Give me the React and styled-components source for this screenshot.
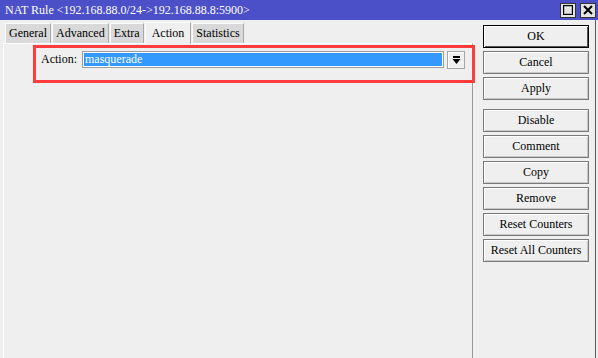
import React from 'react'
import styled, { createGlobalStyle } from 'styled-components'

const tabs = ['General', 'Advanced', 'Extra', 'Action', 'Statistics']
const mainButtons = ['OK', 'Cancel', 'Apply']
const ruleButtons = ['Disable', 'Comment', 'Copy', 'Remove', 'Reset Counters', 'Reset All Counters']

export default function App() {
  return (
    <>
      <GlobalStyle />
      <Window>
        <TitleBar>
          <Title>NAT Rule &lt;192.168.88.0/24-&gt;192.168.88.8:5900&gt;</Title>
          <WinControls>
            <WinButton>
              <svg width="10" height="10" viewBox="0 0 10 10">
                <rect x="0.5" y="0.5" width="9" height="9" fill="none" stroke="#000" strokeWidth="1.4" />
              </svg>
            </WinButton>
            <WinButton>
              <svg width="10" height="10" viewBox="0 0 10 10">
                <path d="M1 1 L9 9 M9 1 L1 9" stroke="#000" strokeWidth="2" />
              </svg>
            </WinButton>
          </WinControls>
        </TitleBar>
        <Body>
          <Main>
            <TabBar>
              {tabs.map((t) => (
                <Tab key={t} active={t === 'Action'}>{t}</Tab>
              ))}
            </TabBar>
            <Panel>
              <Highlight>
                <FieldLabel>Action:</FieldLabel>
                <SelectBox>masquerade</SelectBox>
                <DropButton>
                  <svg width="9" height="9" viewBox="0 0 9 9">
                    <rect x="1" y="0" width="7" height="2" fill="#000" />
                    <path d="M0.5 3 L8.5 3 L4.5 8 Z" fill="#000" />
                  </svg>
                </DropButton>
              </Highlight>
            </Panel>
          </Main>
          <Side>
            <ButtonGroup>
              {mainButtons.map((b) => (
                <Button key={b} primary={b === 'OK'}>{b}</Button>
              ))}
            </ButtonGroup>
            <ButtonGroup>
              {ruleButtons.map((b) => (
                <Button key={b}>{b}</Button>
              ))}
            </ButtonGroup>
          </Side>
        </Body>
      </Window>
    </>
  )
}

const GlobalStyle = createGlobalStyle`
  html, body {
    margin: 0;
    background: #f4f4f4;
  }
  * { box-sizing: border-box; }
`

const Window = styled.div`
  width: 598px;
  height: 358px;
  display: flex;
  flex-direction: column;
  font-family: "Liberation Serif", "Times New Roman", serif;
  font-size: 12px;
  color: #000;
  background: #efefef;
  overflow: hidden;
`

const TitleBar = styled.div`
  height: 20px;
  flex: none;
  display: flex;
  align-items: center;
  justify-content: space-between;
  padding: 0 2px 0 5px;
  background: #4b4fc8;
  color: #fff;
`

const Title = styled.div`
  font-size: 12px;
`

const WinControls = styled.div`
  display: flex;
  gap: 4px;
`

const WinButton = styled.div`
  width: 16px;
  height: 15px;
  display: flex;
  align-items: center;
  justify-content: center;
  background: #e4e4e4;
  border: 1px solid #333;
`

const Body = styled.div`
  flex: 1;
  display: flex;
  width: 596px;
  border-right: 1px solid #5a5a5a;
`

const Main = styled.div`
  width: 473px;
  display: flex;
  flex-direction: column;
  padding: 2px 0 0 3px;
`

const TabBar = styled.div`
  display: flex;
  align-items: flex-end;
  height: 21px;
  padding-left: 2px;
  gap: 1px;
`

const Tab = styled.div`
  height: ${(p) => (p.active ? '22px' : '20px')};
  padding: 0 ${(p) => (p.active ? '6px' : '3px')};
  margin-bottom: ${(p) => (p.active ? '-1px' : '0')};
  display: flex;
  align-items: center;
  background: ${(p) => (p.active ? '#efefef' : '#d9d9d9')};
  border-top: 1px solid #fafafa;
  border-left: 1px solid #fafafa;
  border-right: 1px solid #a8a8a8;
  position: relative;
  z-index: ${(p) => (p.active ? 1 : 0)};
`

const Panel = styled.div`
  flex: 1;
  border-left: 1px solid #fff;
  border-top: 1px solid #fff;
  border-right: 1px solid #9a9a9a;
  background: #efefef;
  padding-top: 1px;
`

const Highlight = styled.div`
  margin: 0 -3px 0 29px;
  height: 38px;
  border: 3px solid #ff3b3b;
  display: flex;
  align-items: flex-start;
  padding: 3px 7px 0 5px;
  position: relative;
  z-index: 2;
`

const FieldLabel = styled.div`
  width: 41px;
  height: 17px;
  line-height: 17px;
`

const SelectBox = styled.div`
  flex: 1;
  height: 17px;
  line-height: 14px;
  padding-left: 2px;
  background: #3399ff;
  color: #fff;
  border: 1px solid #9c9c9c;
  box-shadow: inset 0 0 0 1px #fff;
`

const DropButton = styled.div`
  width: 18px;
  height: 18px;
  margin-left: 3px;
  display: flex;
  align-items: center;
  justify-content: center;
  border: 1px solid #a6a6a6;
  box-shadow: inset 1px 1px 0 #fff;
  background: #efefef;
`

const Side = styled.div`
  flex: 1;
  display: flex;
  flex-direction: column;
  gap: 9px;
  padding: 5px 6px 0 10px;
`

const ButtonGroup = styled.div`
  display: flex;
  flex-direction: column;
  gap: 3px;
`

const Button = styled.div`
  height: 23px;
  display: flex;
  align-items: center;
  justify-content: center;
  background: #efefef;
  border: 1px solid ${(p) => (p.primary ? '#000' : '#7a7a7a')};
  box-shadow: inset 1px 1px 0 #fff, inset -1px -1px 0 ${(p) => (p.primary ? '#555' : '#c8c8c8')};
`
